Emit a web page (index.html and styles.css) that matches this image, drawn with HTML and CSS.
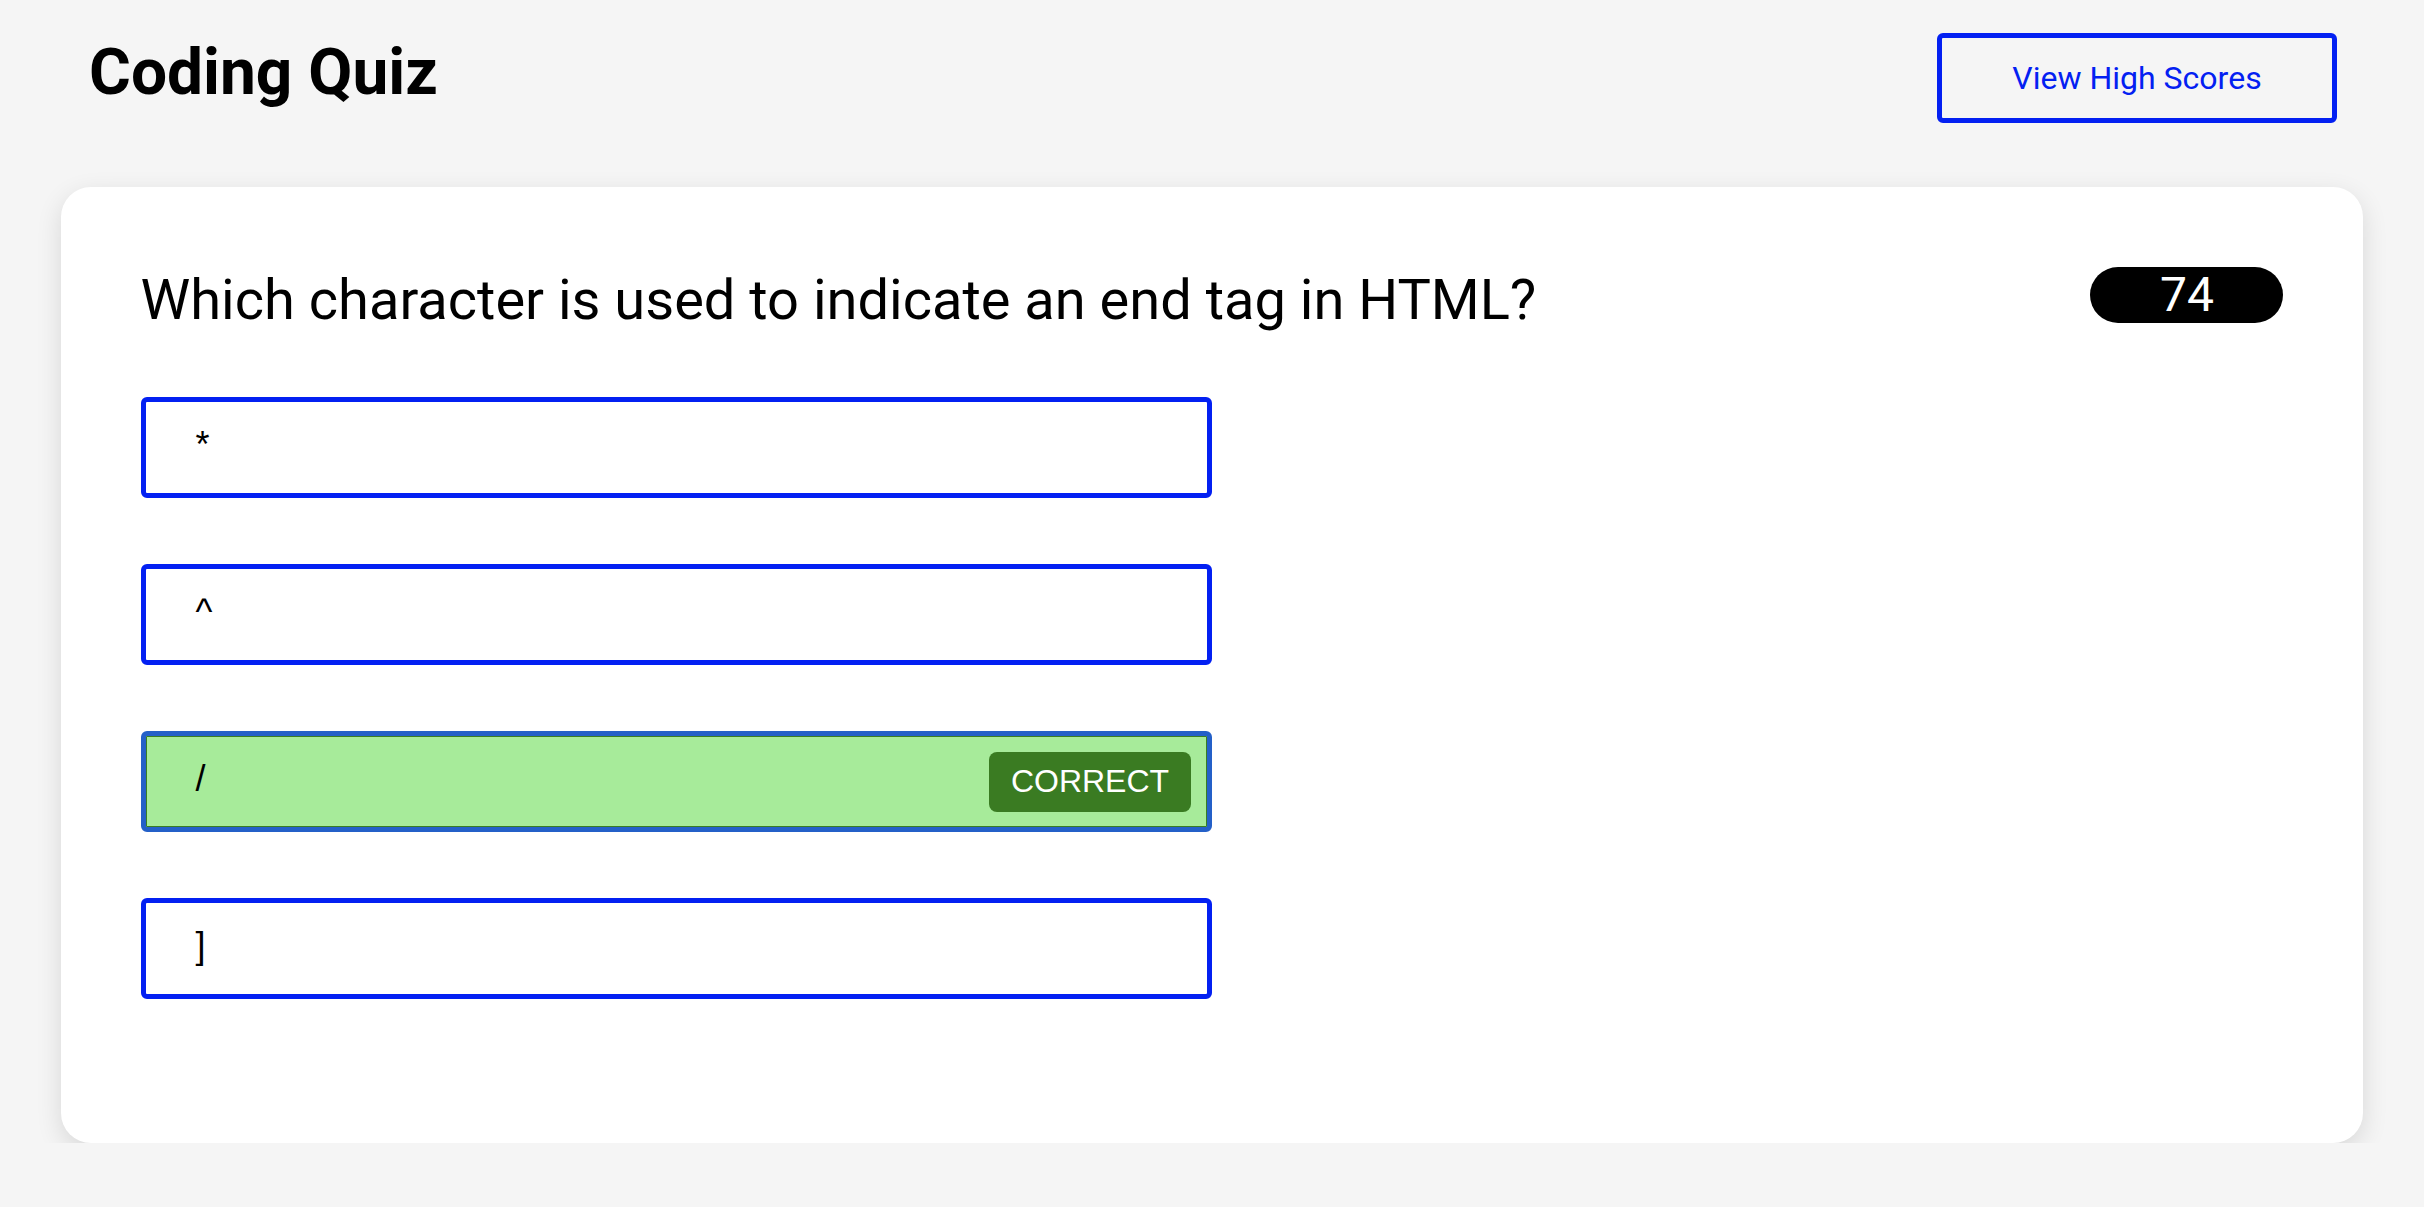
FILE: index.html
```html
<!DOCTYPE html>
<html lang="en">
<head>
<meta charset="utf-8">
<title>Coding Quiz</title>
<link rel="stylesheet" href="styles.css">
</head>
<body>
<header class="header">
  <h1 class="title">Coding Quiz</h1>
  <button class="scores-btn">View High Scores</button>
</header>
<main class="card">
  <div class="question-row">
    <h2 class="question">Which character is used to indicate an end tag in HTML?</h2>
    <div class="timer">74</div>
  </div>
  <div class="options">
    <button class="option"><span class="option-text">*</span></button>
    <button class="option"><span class="option-text">^</span></button>
    <button class="option option-correct"><span class="option-text">/</span><span class="badge">CORRECT</span></button>
    <button class="option"><span class="option-text">]</span></button>
  </div>
</main>
</body>
</html>
```

FILE: styles.css
```css
* { box-sizing: border-box; }

body {
  margin: 0;
  background: #f5f5f5;
  font-family: Roboto, "Liberation Sans", Arial, sans-serif;
  color: #000;
}

.header {
  display: flex;
  justify-content: space-between;
  align-items: flex-start;
  padding: 33px 87px 0 89px;
}

.title {
  margin: 2px 0 0;
  font-size: 64px;
  font-weight: 700;
  line-height: 75px;
}

.scores-btn {
  width: 400px;
  height: 90px;
  border: 5px solid #0320f2;
  border-radius: 6px;
  background: transparent;
  color: #0320f2;
  font-family: Roboto, "Liberation Sans", Arial, sans-serif;
  font-size: 32px;
  cursor: pointer;
}

.card {
  width: 95%;
  margin: 64px auto 0;
  background: #fff;
  border-radius: 30px;
  padding: 80px 80px 144px;
  box-shadow: 0 8px 26px rgba(0, 0, 0, 0.12);
}

.question-row {
  display: flex;
  justify-content: space-between;
  align-items: flex-start;
  margin-bottom: 64px;
}

.question {
  margin: 0;
  font-size: 56px;
  font-weight: 400;
  line-height: normal;
}

.timer {
  width: 193px;
  height: 56px;
  border-radius: 28px;
  background: #000;
  color: #fff;
  font-size: 48px;
  line-height: 56px;
  text-align: center;
}

.options {
  display: flex;
  flex-direction: column;
  gap: 66px;
}

.option {
  display: flex;
  align-items: center;
  width: 50%;
  height: 101px;
  padding: 0 16px 0 50px;
  border: 5px solid #0320f2;
  border-radius: 6px;
  background: #fff;
  color: #000;
  font-family: "Liberation Sans", Arial, sans-serif;
  font-size: 36px;
  text-align: left;
  cursor: pointer;
}

.option-text {
  position: relative;
  top: -3px;
}

.option-correct {
  background: #a7eb9a;
  border-color: #2460c8;
  box-shadow: inset 0 0 0 1px #3a7d22;
}

.badge {
  margin-left: auto;
  width: 202px;
  height: 60px;
  border-radius: 8px;
  background: #3a7b22;
  color: #fff;
  font-family: "Liberation Sans", Arial, sans-serif;
  font-size: 32px;
  line-height: 58px;
  text-align: center;
}
```
